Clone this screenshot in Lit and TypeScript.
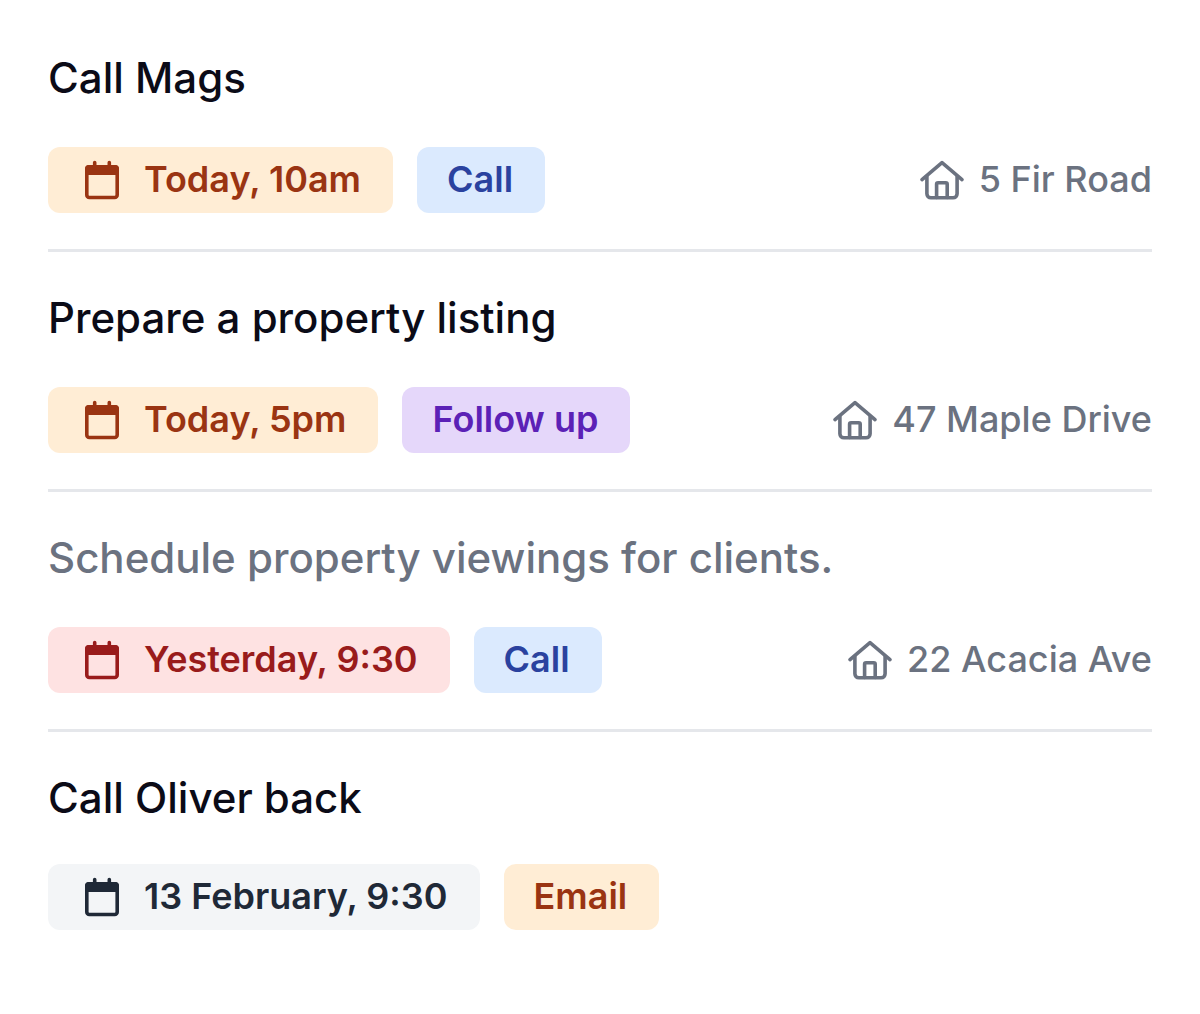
import { LitElement, html, css } from "lit";
import { customElement, property } from "lit/decorators.js";

type Tone = "orange" | "blue" | "purple" | "red" | "grey";

interface Task {
  title: string;
  muted?: boolean;
  due: string;
  dueTone: Tone;
  kind: string;
  kindTone: Tone;
  place?: string;
}

const tasks: Task[] = [
  { title: "Call Mags", due: "Today, 10am", dueTone: "orange", kind: "Call", kindTone: "blue", place: "5 Fir Road" },
  { title: "Prepare a property listing", due: "Today, 5pm", dueTone: "orange", kind: "Follow up", kindTone: "purple", place: "47 Maple Drive" },
  { title: "Schedule property viewings for clients.", muted: true, due: "Yesterday, 9:30", dueTone: "red", kind: "Call", kindTone: "blue", place: "22 Acacia Ave" },
  { title: "Call Oliver back", due: "13 February, 9:30", dueTone: "grey", kind: "Email", kindTone: "orange" },
];

const calendarIcon = html`<svg width="48" height="48" viewBox="0 0 48 48" fill="none" stroke="currentColor" stroke-width="3.600" aria-hidden="true">
  <rect x="8.800" y="11.800" width="30.400" height="30.700" rx="2.500"/>
  <path d="M10.500 10h27a3.500 3.500 0 0 1 3.500 3.500V20H7v-6.500A3.500 3.500 0 0 1 10.500 10z" fill="currentColor" stroke="none"/>
  <path d="M16.700 7.500V13M31.300 7.500V13" stroke-linecap="round"/>
</svg>`;

const houseIcon = html`<svg width="48" height="48" viewBox="0 0 48 48" fill="none" stroke="currentColor" stroke-width="3.600" stroke-linecap="round" stroke-linejoin="round" aria-hidden="true">
  <path d="M4 24.700L24 7.700l20 17"/>
  <path d="M8.900 21.500V38.800a4 4 0 0 0 4 4h22.200a4 4 0 0 0 4-4V21.500"/>
  <path d="M18.600 42.500V29.300a1.500 1.500 0 0 1 1.500-1.500h7.600a1.500 1.500 0 0 1 1.500 1.500v13.200"/>
</svg>`;

@customElement("task-tag")
class TaskTag extends LitElement {
  @property() tone: Tone = "grey";
  @property({ type: Boolean }) dated = false;

  static styles = css`
    :host { display: block; }
    .tag {
      display: flex;
      align-items: center;
      gap: 18px;
      padding: 8px 32px 10px 30px;
      border-radius: 12px;
      font-size: 36px;
      line-height: 48px;
      font-weight: 600;
      white-space: nowrap;
    }
    .orange { background: #ffedd5; color: #9a3412; }
    .blue { background: #dbeafe; color: #2a429f; }
    .purple { background: #e5d7fa; color: #5b21b6; }
    .red { background: #fee2e2; color: #991b1b; }
    .grey { background: #f3f5f7; color: #1f2937; }
  `;

  render() {
    return html`<div class="tag ${this.tone}">
      ${this.dated ? calendarIcon : ""}<span><slot></slot></span>
    </div>`;
  }
}

@customElement("app-root")
class AppRoot extends LitElement {
  static styles = css`
    :host {
      display: block;
      min-height: 100vh;
      background: #fff;
      font-family: Inter, "Liberation Sans", sans-serif;
    }
    .list { margin: 0; padding: 12px 48px; list-style: none; }
    .task { padding: 36px 0 33px; border-bottom: 3px solid #e5e7eb; }
    .task:last-child { border-bottom: 0; }
    .title { margin: 0 0 36px; font-size: 42px; line-height: 60px; font-weight: 500; color: #0b0b17; }
    .muted { color: #6b7280; }
    .details { display: flex; align-items: center; gap: 24px; }
    .place {
      display: flex;
      align-items: center;
      gap: 13px;
      margin-left: auto;
      padding: 11px 0 13px;
      font-size: 36px;
      line-height: 48px;
      font-weight: 500;
      color: #6b7280;
      white-space: nowrap;
    }
  `;

  render() {
    return html`<ul class="list">
      ${tasks.map(
        (task) => html`<li class="task">
          <h2 class="title ${task.muted ? "muted" : ""}">${task.title}</h2>
          <div class="details">
            <task-tag .tone=${task.dueTone} dated>${task.due}</task-tag>
            <task-tag .tone=${task.kindTone}>${task.kind}</task-tag>
            ${task.place ? html`<div class="place">${houseIcon}<span>${task.place}</span></div>` : ""}
          </div>
        </li>`
      )}
    </ul>`;
  }
}
